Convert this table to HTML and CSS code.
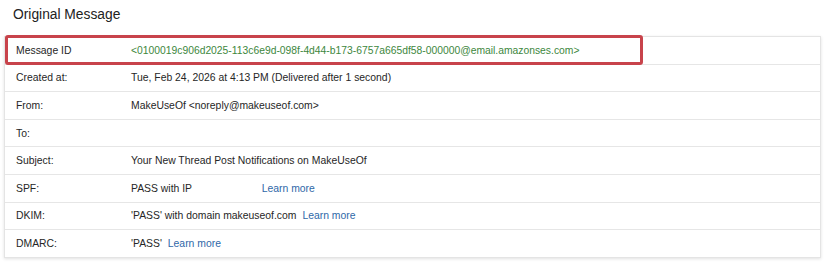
FILE: index.html
```html
<!DOCTYPE html>
<html lang="en">
<head>
<meta charset="utf-8">
<title>Original Message</title>
<link rel="stylesheet" href="styles.css">
</head>
<body>
<h1 class="title">Original Message</h1>
<div class="card">
  <div class="highlight"></div>
  <div class="row">
    <div class="label">Message ID</div>
    <div class="value msgid">&lt;0100019c906d2025-113c6e9d-098f-4d44-b173-6757a665df58-000000@email.amazonses.com&gt;</div>
  </div>
  <div class="row">
    <div class="label">Created at:</div>
    <div class="value">Tue, Feb 24, 2026 at 4:13 PM (Delivered after 1 second)</div>
  </div>
  <div class="row">
    <div class="label">From:</div>
    <div class="value">MakeUseOf &lt;noreply@makeuseof.com&gt;</div>
  </div>
  <div class="row">
    <div class="label">To:</div>
    <div class="value"></div>
  </div>
  <div class="row">
    <div class="label">Subject:</div>
    <div class="value">Your New Thread Post Notifications on MakeUseOf</div>
  </div>
  <div class="row">
    <div class="label">SPF:</div>
    <div class="value">PASS with IP <span class="redacted"></span><a class="link" href="#">Learn more</a></div>
  </div>
  <div class="row">
    <div class="label">DKIM:</div>
    <div class="value">'PASS' with domain makeuseof.com <a class="link" href="#">Learn more</a></div>
  </div>
  <div class="row last">
    <div class="label">DMARC:</div>
    <div class="value">'PASS' <a class="link" href="#">Learn more</a></div>
  </div>
</div>
</body>
</html>
```
FILE: styles.css
```css
html, body {
  margin: 0;
  padding: 0;
  background: #ffffff;
}

body {
  font-family: "Liberation Sans", Arial, sans-serif;
  color: #262626;
  width: 825px;
  height: 275px;
  overflow: hidden;
}

.title {
  margin: 0;
  padding: 6px 0 0 13px;
  height: 30px;
  font-size: 13.8px;
  font-weight: normal;
  line-height: 17px;
  color: #222222;
}

.card {
  position: relative;
  margin: 0 4px;
  border: 1px solid #e4e4e4;
  box-shadow: 0 1px 3px rgba(0, 0, 0, 0.12);
  background: #ffffff;
}

.row {
  display: grid;
  grid-template-columns: 115px 1fr;
  align-items: center;
  height: 26.6px;
  padding-left: 11px;
  border-bottom: 1px solid #e6e6e6;
  font-size: 10.4px;
}

.row.last {
  border-bottom: none;
}

.label {
  color: #262626;
}

.value {
  color: #262626;
  white-space: nowrap;
}

.msgid {
  color: #3d873d;
  font-size: 10.33px;
}

.redacted {
  display: inline-block;
  width: 64px;
}

.link {
  color: #2f68a8;
  text-decoration: none;
  margin-left: 3px;
}

.highlight {
  position: absolute;
  left: 0;
  top: -2px;
  width: 632px;
  height: 24px;
  border: 3px solid #c8434b;
  border-radius: 3px;
  pointer-events: none;
}
```
